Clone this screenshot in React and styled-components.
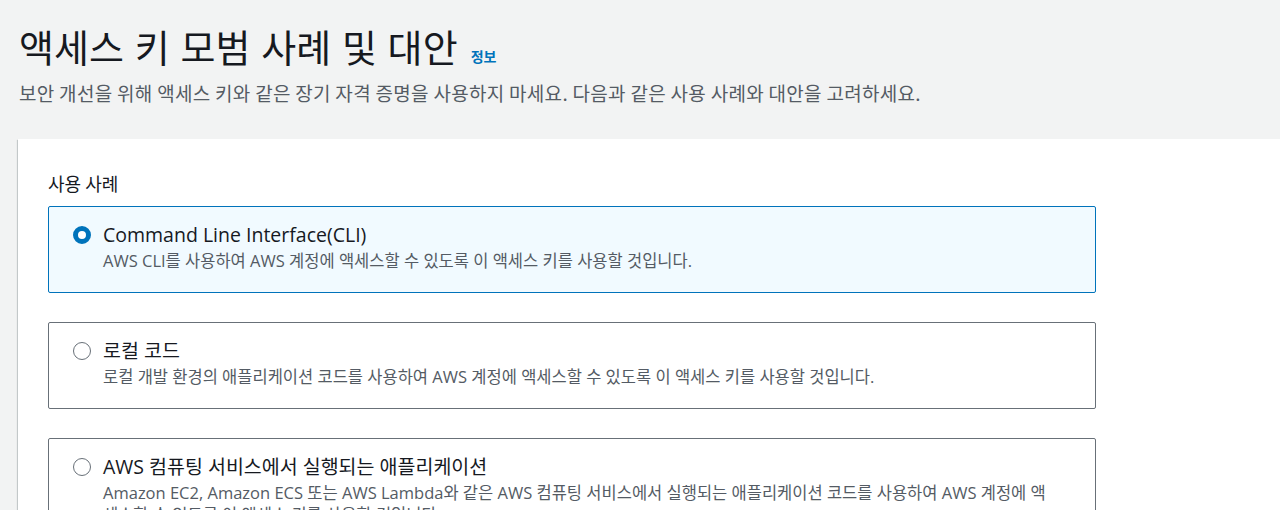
import React, { useState } from "react";
import styled, { createGlobalStyle } from "styled-components";

const Global = createGlobalStyle`
  html, body { margin: 0; padding: 0; background: #f2f3f3; overflow: hidden; }
  body { font-family: "Open Sans", "Noto Sans CJK KR", sans-serif; color: #16191f; }
  * { box-sizing: border-box; }
`;

const Page = styled.div`
  display: flex;
  flex-direction: column;
  min-height: 510px;
`;

const Header = styled.header`
  padding: 20px 0 0 19px;
  display: flex;
  flex-direction: column;
  gap: 8px;
  height: 139px;
`;

const TitleRow = styled.div`
  display: flex;
  align-items: baseline;
  gap: 13px;
`;

const Title = styled.h1`
  margin: 0;
  font-size: 38px;
  font-weight: 400;
  line-height: 52px;
  letter-spacing: 0.1px;
  word-spacing: 2px;
  color: #16191f;
  font-family: "Noto Sans CJK KR", sans-serif;
`;

const InfoLink = styled.a`
  font-size: 14px;
  font-weight: 700;
  color: #0073bb;
  text-decoration: none;
  font-family: "Noto Sans CJK KR", sans-serif;
`;

const Subtitle = styled.p`
  margin: 0;
  font-size: 19px;
  line-height: 26px;
  letter-spacing: 0.3px;
  color: #545b64;
  font-family: "Noto Sans CJK KR", sans-serif;
`;

const Card = styled.section`
  margin-left: 18px;
  background: #ffffff;
  box-shadow: 0 1px 1px 0 rgba(0, 28, 36, 0.3), 1px 1px 1px 0 rgba(0, 28, 36, 0.15), -1px 1px 1px 0 rgba(0, 28, 36, 0.15);
  padding: 32px 30px 30px 30px;
  flex: 1;
`;

const GroupLabel = styled.div`
  font-size: 18px;
  line-height: 24px;
  color: #16191f;
  margin-bottom: 11px;
  font-family: "Noto Sans CJK KR", sans-serif;
`;

const TileList = styled.div`
  display: flex;
  flex-direction: column;
  gap: 29px;
  width: 1048px;
`;

const Tile = styled.label`
  display: flex;
  align-items: flex-start;
  gap: 12px;
  padding: 15px 40px 20px 24px;
  border: 1px solid ${(p) => (p.$selected ? "#0073bb" : "#687078")};
  background: ${(p) => (p.$selected ? "#f1faff" : "#ffffff")};
  border-radius: 2px;
  cursor: pointer;
`;

const Radio = styled.span`
  flex: none;
  width: 18px;
  height: 18px;
  margin-top: 4px;
  border-radius: 50%;
  border: ${(p) => (p.$checked ? "5px solid #0073bb" : "1.5px solid #687078")};
  background: #ffffff;
`;

const TileText = styled.div`
  display: flex;
  flex-direction: column;
  gap: 2px;
  min-width: 0;
`;

const TileTitle = styled.div`
  font-size: 19.5px;
  line-height: 26px;
  color: #16191f;
`;

const TileDesc = styled.div`
  font-size: 16.5px;
  line-height: 22px;
  color: #545b64;
`;

const options = [
  {
    id: "cli",
    title: "Command Line Interface(CLI)",
    desc: "AWS CLI를 사용하여 AWS 계정에 액세스할 수 있도록 이 액세스 키를 사용할 것입니다.",
  },
  {
    id: "local",
    title: "로컬 코드",
    desc: "로컬 개발 환경의 애플리케이션 코드를 사용하여 AWS 계정에 액세스할 수 있도록 이 액세스 키를 사용할 것입니다.",
  },
  {
    id: "compute",
    title: "AWS 컴퓨팅 서비스에서 실행되는 애플리케이션",
    desc: "Amazon EC2, Amazon ECS 또는 AWS Lambda와 같은 AWS 컴퓨팅 서비스에서 실행되는 애플리케이션 코드를 사용하여 AWS 계정에 액세스할 수 있도록 이 액세스 키를 사용할 것입니다.",
  },
];

export default function App() {
  const [selected, setSelected] = useState("cli");
  return (
    <Page>
      <Global />
      <Header>
        <TitleRow>
          <Title>액세스 키 모범 사례 및 대안</Title>
          <InfoLink href="#">정보</InfoLink>
        </TitleRow>
        <Subtitle>
          보안 개선을 위해 액세스 키와 같은 장기 자격 증명을 사용하지 마세요. 다음과 같은 사용 사례와 대안을 고려하세요.
        </Subtitle>
      </Header>
      <Card>
        <GroupLabel>사용 사례</GroupLabel>
        <TileList>
          {options.map((o) => (
            <Tile key={o.id} $selected={selected === o.id} onClick={() => setSelected(o.id)}>
              <Radio $checked={selected === o.id} />
              <TileText>
                <TileTitle>{o.title}</TileTitle>
                <TileDesc>{o.desc}</TileDesc>
              </TileText>
            </Tile>
          ))}
        </TileList>
      </Card>
    </Page>
  );
}
